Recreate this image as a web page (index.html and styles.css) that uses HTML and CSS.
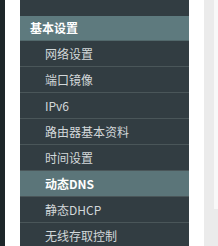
FILE: index.html
```html
<!DOCTYPE html>
<html lang="zh-CN">
<head>
  <meta charset="UTF-8">
  <title>基本设置</title>
  <link rel="stylesheet" href="styles.css">
</head>
<body>
  <div class="page">
    <div class="edge"></div>
    <div class="sidebar">
      <div class="top"></div>
      <div class="group">基本设置</div>
      <div class="item">网络设置</div>
      <div class="item">端口镜像</div>
      <div class="item">IPv6</div>
      <div class="item">路由器基本资料</div>
      <div class="item">时间设置</div>
      <div class="item active">动态DNS</div>
      <div class="item">静态DHCP</div>
      <div class="item">无线存取控制</div>
    </div>
    <div class="main">
      <div class="panel"></div>
    </div>
  </div>
</body>
</html>
```

FILE: styles.css
```css
html, body {
  margin: 0;
  height: 100%;
  background: #fff;
  font-family: "Noto Sans CJK SC", "DejaVu Sans", sans-serif;
  font-size: 12px;
  overflow: hidden;
}
.page {
  display: flex;
  height: 246px;
}
.edge {
  width: 5px;
  background: #1d2629;
  margin-right: 15px;
}
.sidebar {
  width: 169px;
  background: #323d42;
  margin-right: 15px;
}
.top {
  height: 16px;
}
.group {
  height: 24px;
  line-height: 24px;
  padding-left: 10px;
  background: #5e7a7e;
  color: #fff;
  font-weight: bold;
  border-bottom: 1px solid #52686b;
}
.item {
  height: 25px;
  line-height: 25px;
  padding-left: 25px;
  color: #d2d8da;
  border-bottom: 1px solid #4a5659;
}
.item.active {
  background: #5b7579;
  color: #fff;
  font-weight: bold;
}
.main {
  flex: 1;
  background: #ebebeb;
  padding-left: 10px;
}
.panel {
  height: 209px;
  background: #f8f8f8;
}
```
